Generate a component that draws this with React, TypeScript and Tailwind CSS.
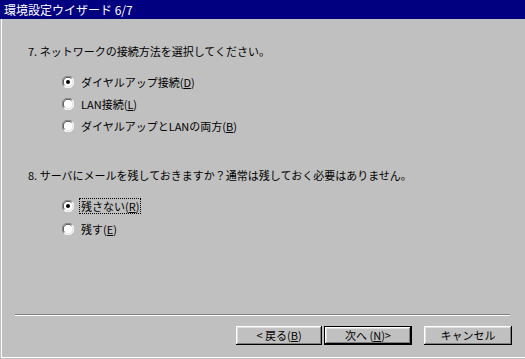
import React from "react";

const font = { fontFamily: '"Noto Sans CJK JP", "Noto Sans", sans-serif' };

function Radio({ checked }: { checked?: boolean }) {
  return (
    <svg width="12" height="12" viewBox="0 0 12 12" className="shrink-0">
      <circle cx="6" cy="6" r="5.5" fill="#ffffff" />
      <path d="M1.8 10.2 A5.5 5.5 0 0 1 10.2 1.8" fill="none" stroke="#808080" strokeWidth="1" />
      <path d="M2.6 9.4 A4.5 4.5 0 0 1 9.4 2.6" fill="none" stroke="#404040" strokeWidth="1" />
      <path d="M10.2 1.8 A5.5 5.5 0 0 1 1.8 10.2" fill="none" stroke="#ffffff" strokeWidth="1" />
      <path d="M9.4 2.6 A4.5 4.5 0 0 1 2.6 9.4" fill="none" stroke="#dfdfdf" strokeWidth="1" />
      {checked && <circle cx="6" cy="6" r="2" fill="#000000" />}
    </svg>
  );
}

function Option({
  checked,
  focused,
  children,
  h,
}: {
  checked?: boolean;
  focused?: boolean;
  children: React.ReactNode;
  h: string;
}) {
  return (
    <div className={`flex items-center pl-[60px] ${h}`}>
      <Radio checked={checked} />
      <span
        className={`ml-[5px] leading-[14px] px-px ${
          focused ? "border border-dotted border-black" : "border border-transparent"
        }`}
      >
        {children}
      </span>
    </div>
  );
}

const btn =
  "h-[19px] flex items-center justify-center text-[11px] text-black bg-[#c0c0c0] shadow-[inset_-1px_-1px_#000000,inset_1px_1px_#ffffff,inset_-2px_-2px_#808080,inset_2px_2px_#dfdfdf]";

export default function App() {
  return (
    <div className="w-[525px] h-[359px] bg-[#c0c0c0] text-black text-[11px] flex flex-col" style={font}>
      <div className="h-[19px] bg-[#000080] text-white text-[12px] leading-[19px] pl-[4px] shrink-0">
        環境設定ウイザード 6/7
      </div>
      <div className="flex-1 flex flex-col border-l border-l-white ml-px border-b border-b-white mb-[1px]">
        <div className="mt-[25px] pl-[26px] leading-[15px] h-[15px]">
          7. ネットワークの接続方法を選択してください。
        </div>
        <div className="mt-[12px] flex flex-col">
          <Option checked h="h-[22px]">
            ダイヤルアップ接続(<u>D</u>)
          </Option>
          <Option h="h-[22px]">
            LAN接続(<u>L</u>)
          </Option>
          <Option h="h-[22px]">
            ダイヤルアップとLANの両方(<u>B</u>)
          </Option>
        </div>
        <div className="mt-[31px] pl-[26px] leading-[15px] h-[15px]">
          8. サーバにメールを残しておきますか？通常は残しておく必要はありません。
        </div>
        <div className="mt-[11px] flex flex-col">
          <Option checked focused h="h-[23px]">
            残さない(<u>R</u>)
          </Option>
          <Option h="h-[23px]">
            残す(<u>E</u>)
          </Option>
        </div>
        <div className="mt-[74px] ml-[13px] w-[495px] border-t border-t-[#808080] border-b border-b-white" />
        <div className="mt-[10px] flex pl-[234px]">
          <button className={`${btn} w-[86px]`}>&lt;&nbsp;戻る(<u>B</u>)</button>
          <div className="ml-[2px] w-[88px] h-[19px] border border-black">
            <button className={`w-full !h-[17px] ${btn}`}>次へ (<u>N</u>)&gt;</button>
          </div>
          <button className={`${btn} ml-[12px] w-[88px]`}>キャンセル</button>
        </div>
      </div>
    </div>
  );
}
